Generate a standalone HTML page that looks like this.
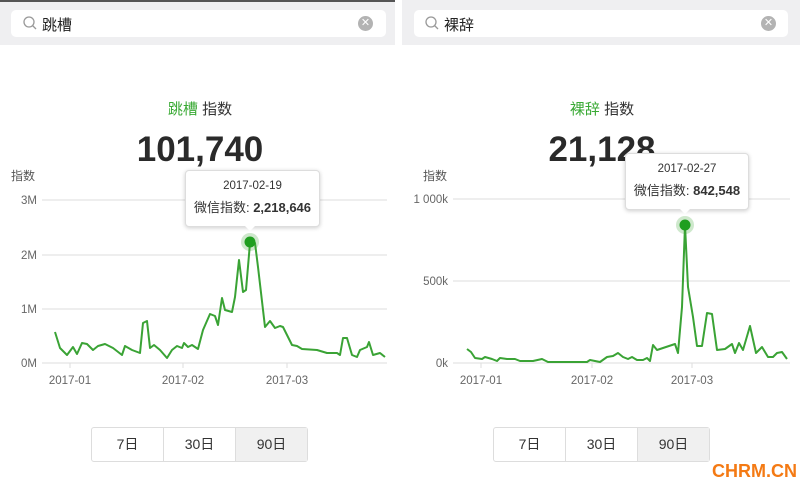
<!DOCTYPE html><html><head><meta charset="utf-8"><style>
body{margin:0;width:800px;height:490px;background:#fff;position:relative;overflow:hidden;font-family:"Liberation Sans","Noto Sans CJK SC",sans-serif}
.a{position:absolute}
.top{background:#efeff1;height:45px;top:0}
.sb{background:#fff;border-radius:5px;top:10px;height:27px}
.st{font-size:15px;color:#222;top:14px}
.x{width:15px;height:15px;border-radius:50%;background:#b3b3b3;top:16px;color:#fff;font-size:11px;text-align:center;line-height:15px}
.ttl{font-size:15px;color:#333;top:98px;text-align:center;width:400px}
.big{font-size:35px;font-weight:bold;color:#2a2a2a;top:130px;text-align:center;width:400px}
.lab{font-size:12px;color:#555}
.ax{font-size:11.5px;color:#666}
.tip{background:#fff;border:1px solid #ddd;border-radius:4px;box-shadow:0 1px 4px rgba(0,0,0,.2);text-align:center;color:#333}
.btns{top:427px;height:33px;border:1px solid #ddd;border-radius:3px;display:flex;font-size:14px;color:#333}
.btns div{flex:1;text-align:center;line-height:33px;border-right:1px solid #ddd}
.btns div:last-child{border-right:0;background:#f0f0f0}
</style></head><body>
<div class="a top" style="left:0;width:395px;border-top:2px solid #555;height:43px"></div>
<div class="a top" style="left:402px;width:398px"></div>
<div class="a sb" style="left:11px;width:375px"></div>
<div class="a sb" style="left:414px;width:374px"></div>
<svg class="a" style="left:22px;top:15px" width="16" height="16"><circle cx="7" cy="7" r="5" fill="none" stroke="#999" stroke-width="1.3"/><line x1="10.5" y1="10.5" x2="14" y2="14" stroke="#999" stroke-width="1.3"/></svg>
<svg class="a" style="left:424px;top:15px" width="16" height="16"><circle cx="7" cy="7" r="5" fill="none" stroke="#999" stroke-width="1.3"/><line x1="10.5" y1="10.5" x2="14" y2="14" stroke="#999" stroke-width="1.3"/></svg>
<div class="a st" style="left:42px">跳槽</div>
<div class="a st" style="left:444px">裸辞</div>
<div class="a x" style="left:358px">✕</div>
<div class="a x" style="left:761px">✕</div>

<div class="a ttl" style="left:0"><span style="color:#3aaa35">跳槽</span> 指数</div>
<div class="a ttl" style="left:402px"><span style="color:#3aaa35">裸辞</span> 指数</div>
<div class="a big" style="left:0">101,740</div>
<div class="a big" style="left:402px">21,128</div>
<div class="a lab" style="left:11px;top:167px">指数</div>
<div class="a lab" style="left:423px;top:167px">指数</div>

<svg class="a" style="left:0;top:0" width="800" height="490">
<g stroke="#ddd" stroke-width="1">
<line x1="42" y1="200" x2="387" y2="200"/><line x1="42" y1="255" x2="387" y2="255"/><line x1="42" y1="309" x2="387" y2="309"/><line x1="42" y1="363" x2="387" y2="363"/>
<line x1="453" y1="199" x2="790" y2="199"/><line x1="453" y1="281" x2="790" y2="281"/><line x1="453" y1="363" x2="790" y2="363"/>
<line x1="70" y1="363" x2="70" y2="368"/><line x1="183" y1="363" x2="183" y2="368"/><line x1="287" y1="363" x2="287" y2="368"/>
<line x1="481" y1="363" x2="481" y2="368"/><line x1="592" y1="363" x2="592" y2="368"/><line x1="692" y1="363" x2="692" y2="368"/>
</g>
<g font-size="11.5" fill="#666" font-family="Liberation Sans">
<text x="37" y="204" text-anchor="end">3M</text><text x="37" y="259" text-anchor="end">2M</text><text x="37" y="313" text-anchor="end">1M</text><text x="37" y="367" text-anchor="end">0M</text>
<text x="448" y="203" text-anchor="end">1 000k</text><text x="448" y="285" text-anchor="end">500k</text><text x="448" y="367" text-anchor="end">0k</text>
<text x="70" y="384" text-anchor="middle">2017-01</text><text x="183" y="384" text-anchor="middle">2017-02</text><text x="287" y="384" text-anchor="middle">2017-03</text>
<text x="481" y="384" text-anchor="middle">2017-01</text><text x="592" y="384" text-anchor="middle">2017-02</text><text x="692" y="384" text-anchor="middle">2017-03</text>
</g>
<polyline fill="none" stroke="#3aa335" stroke-width="2" stroke-linejoin="round" points="55,332 60,348 67,355 73,347 77,354 82,343 87,344 93,350 98,346 105,344 113,348 122,355 125,346 132,350 140,353 143,323 147,321 150,348 154,345 160,350 167,358 172,350 177,346 182,348 184,343 188,347 192,345 198,349 203,330 210,314 215,316 218,325 222,298 225,310 232,312 235,297 239,260 243,292 246,290 250,243 255,243 258,267 265,327 270,321 275,328 280,326 283,327 292,345 297,346 302,349 317,350 327,353 337,353 340,355 343,338 347,338 352,355 357,357 360,350 367,347 369,342 373,355 380,353 385,357"/>
<polyline fill="none" stroke="#3aa335" stroke-width="2" stroke-linejoin="round" points="467,349 471,352 475,358 482,359 485,357 492,359 497,361 500,358 507,359 515,359 520,361 533,361 542,359 548,362 567,362 587,362 590,360 600,362 607,357 613,356 618,353 623,357 628,359 632,357 637,360 643,360 647,358 650,361 653,345 657,350 675,344 678,353 682,307 685,225 688,287 693,317 697,346 702,346 707,313 712,314 717,350 725,349 732,344 735,353 739,343 743,350 750,326 756,353 762,347 768,357 773,357 777,353 782,352 787,359"/>
<circle cx="250" cy="242" r="9" fill="#3aa335" opacity=".25"/><circle cx="250" cy="242" r="5.5" fill="#1f9e1f"/>
<circle cx="685" cy="225" r="9" fill="#3aa335" opacity=".25"/><circle cx="685" cy="225" r="5.5" fill="#1f9e1f"/>
</svg>

<div class="a tip" style="left:185px;top:170px;width:133px;height:55px">
<div style="font-size:11.5px;margin-top:9px">2017-02-19</div>
<div style="font-size:13px;margin-top:5px">微信指数: <b>2,218,646</b></div></div>
<div class="a" style="left:244px;top:225px;width:0;height:0;border:6px solid transparent;border-top-color:#fff"></div>
<div class="a tip" style="left:625px;top:153px;width:122px;height:55px">
<div style="font-size:11.5px;margin-top:9px">2017-02-27</div>
<div style="font-size:13px;margin-top:5px">微信指数: <b>842,548</b></div></div>
<div class="a" style="left:679px;top:208px;width:0;height:0;border:6px solid transparent;border-top-color:#fff"></div>

<div class="a btns" style="left:91px;width:215px"><div>7日</div><div>30日</div><div>90日</div></div>
<div class="a btns" style="left:493px;width:215px"><div>7日</div><div>30日</div><div>90日</div></div>
<div class="a" style="left:712px;top:461px;font-size:18px;font-weight:bold;color:#f47a14">CHRM.CN</div>
</body></html>
